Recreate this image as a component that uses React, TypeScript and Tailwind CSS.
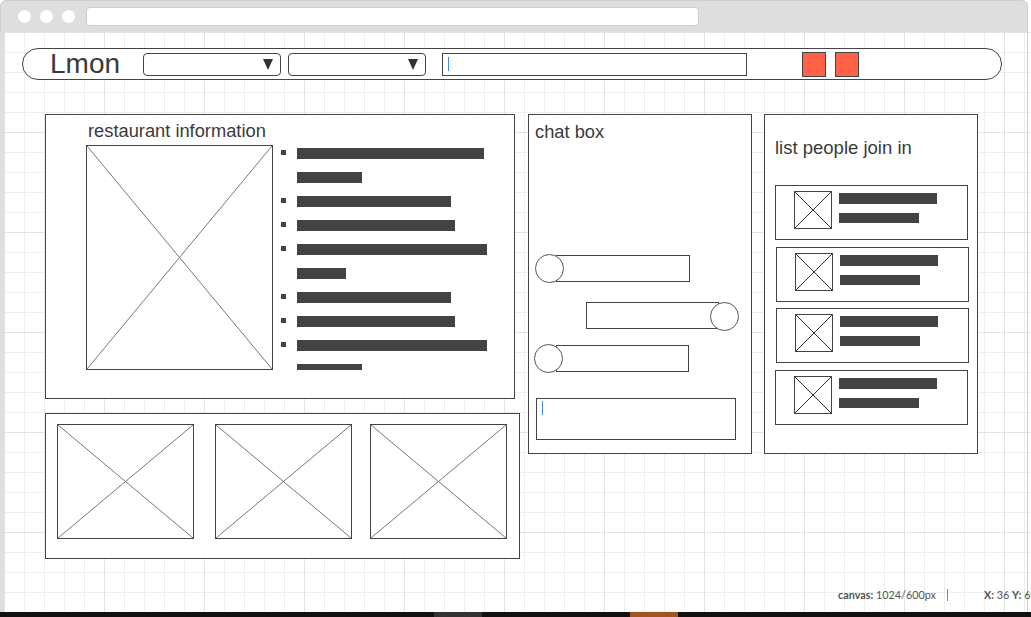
const infoRows = [
  { w: 187, bullet: true },
  { w: 65, bullet: false },
  { w: 154, bullet: true },
  { w: 158, bullet: true },
  { w: 190, bullet: true },
  { w: 49, bullet: false },
  { w: 154, bullet: true },
  { w: 158, bullet: true },
  { w: 190, bullet: true },
  { w: 65, bullet: false },
];

const people = ["ml-[10px] mt-[28px]", "ml-[11px] mt-[7px]", "ml-[11px] mt-[6px]", "ml-[10px] mt-[7px]"];

function Placeholder({ className, dot }: { className: string; dot?: boolean }) {
  return (
    <div className={`border border-[#444] bg-white shrink-0 ${className}`}>
      <svg className="block w-full h-full" viewBox="0 0 100 100" preserveAspectRatio="none">
        <line x1="0" y1="0" x2="100" y2="100" stroke={dot ? "#333" : "#777"} strokeWidth="1" vectorEffect="non-scaling-stroke" />
        <line x1="100" y1="0" x2="0" y2="100" stroke={dot ? "#333" : "#777"} strokeWidth="1" vectorEffect="non-scaling-stroke" />
      </svg>
    </div>
  );
}

function Select({ className }: { className: string }) {
  return (
    <div className={`h-[23px] rounded-[4px] border border-[#444] bg-white flex items-center justify-end pr-[7px] ${className}`}>
      <svg width="10" height="11" viewBox="0 0 10 11">
        <polygon points="0,0 10,0 5,11" fill="#333" />
      </svg>
    </div>
  );
}

function Circle({ className }: { className: string }) {
  return <div className={`relative z-10 w-[29px] h-[29px] shrink-0 rounded-full border border-[#555] bg-white ${className}`} />;
}

export default function App() {
  return (
    <div className="w-[1031px] h-[617px] overflow-hidden bg-white flex flex-col font-['Liberation_Sans',Arial,sans-serif] text-[#3a3a3a]">
      {/* browser chrome */}
      <div className="h-[32px] w-[1028px] shrink-0 bg-[#dedede] rounded-t-[6px] border border-b-0 border-[#cfcfcf] flex items-center">
        <div className="ml-[17px] w-[13px] h-[13px] rounded-full bg-white" />
        <div className="ml-[9px] w-[13px] h-[13px] rounded-full bg-white" />
        <div className="ml-[9px] w-[13px] h-[13px] rounded-full bg-white" />
        <div className="ml-[11px] w-[613px] h-[19px] rounded-[4px] bg-white border border-[#cfcfcf]" />
      </div>

      <div className="flex-1 flex bg-white bg-[linear-gradient(to_right,#e3e3e3_1px,transparent_1px),linear-gradient(to_bottom,#e3e3e3_1px,transparent_1px),linear-gradient(to_right,#eeeeee_1px,transparent_1px),linear-gradient(to_bottom,#eeeeee_1px,transparent_1px)] bg-[length:100px_100px,100px_100px,20px_20px,20px_20px] bg-[position:4px_0px]">
        <div className="w-[4px] bg-[#dedede]" />
        <div className="w-[1024px] border-r border-[#cfcfcf] flex flex-col">
          {/* header bar */}
          <div className="mt-[16px] ml-[18px] w-[980px] h-[32px] rounded-full border border-[#444] bg-white flex items-center">
            <span className="ml-[27px] w-[93px] text-[28px] leading-[30px]">Lmon</span>
            <Select className="w-[138px]" />
            <Select className="ml-[7px] w-[138px]" />
            <div className="ml-[16px] w-[305px] h-[23px] border border-[#444] bg-white flex items-center pl-[5px]">
              <div className="w-[1px] h-[14px] bg-[#3b8de0]" />
            </div>
            <div className="ml-[55px] w-[24px] h-[25px] border border-[#444] bg-[#ff6347]" />
            <div className="ml-[9px] w-[24px] h-[25px] border border-[#444] bg-[#ff6347]" />
          </div>

          {/* main */}
          <div className="mt-[34px] ml-[41px] flex items-start">
            <div className="w-[475px] flex flex-col">
              <div className="w-[470px] h-[285px] border border-[#444] bg-white flex flex-col">
                <div className="ml-[42px] mt-[7px] text-[18.3px] leading-[18px]">restaurant information</div>
                <div className="ml-[40px] mt-[5px] flex">
                  <Placeholder className="w-[187px] h-[225px]" />
                  <div className="ml-[8px] h-[225px] overflow-hidden flex flex-col">
                    {infoRows.map((r, i) => (
                      <div key={i} className="h-[24px] shrink-0 flex items-start">
                        <div className={`mt-[5px] w-[5px] h-[5px] ${r.bullet ? "bg-[#444]" : ""}`} />
                        <div className="ml-[11px] mt-[3px] h-[11px] bg-[#444]" style={{ width: r.w }} />
                      </div>
                    ))}
                  </div>
                </div>
              </div>
              <div className="mt-[14px] w-[475px] h-[146px] border border-[#444] bg-white flex items-start pt-[10px] pl-[11px]">
                <Placeholder className="w-[137px] h-[115px]" />
                <Placeholder className="ml-[21px] w-[137px] h-[115px]" />
                <Placeholder className="ml-[18px] w-[137px] h-[115px]" />
              </div>
            </div>

            {/* chat */}
            <div className="ml-[8px] w-[224px] h-[340px] border border-[#444] bg-white flex flex-col">
              <div className="ml-[6px] mt-[8px] text-[18.3px] leading-[18px]">chat box</div>
              <div className="ml-[6px] mt-[113px] flex items-center">
                <Circle className="" />
                <div className="-ml-[8px] w-[134px] h-[27px] border border-[#444]" />
              </div>
              <div className="ml-[57px] mt-[19px] flex items-start">
                <div className="w-[133px] h-[27px] border border-[#444]" />
                <Circle className="-ml-[9px]" />
              </div>
              <div className="ml-[5px] mt-[13px] flex items-center">
                <Circle className="" />
                <div className="-ml-[7px] w-[133px] h-[27px] border border-[#444]" />
              </div>
              <div className="ml-[7px] mt-[25px] w-[200px] h-[42px] border border-[#444] pl-[5px] pt-[2px]">
                <div className="w-[1px] h-[14px] bg-[#3b8de0]" />
              </div>
            </div>

            {/* people */}
            <div className="ml-[12px] w-[214px] h-[340px] border border-[#444] bg-white flex flex-col">
              <div className="ml-[10px] mt-[23px] text-[18.5px] leading-[19px]">list people join in</div>
              {people.map((m, i) => (
                <div key={i} className={`w-[193px] h-[55px] shrink-0 border border-[#444] flex items-start ${m}`}>
                  <Placeholder dot className="ml-[18px] mt-[5px] w-[38px] h-[38px]" />
                  <div className="ml-[7px] mt-[7px] flex flex-col">
                    <div className="w-[98px] h-[11px] bg-[#444]" />
                    <div className="mt-[9px] w-[80px] h-[10px] bg-[#444]" />
                  </div>
                </div>
              ))}
            </div>
          </div>

          {/* status */}
          <div className="mt-auto mb-[10px] ml-[834px] flex items-center whitespace-nowrap font-['Lato',sans-serif] text-[10.8px] leading-[14px] text-[#555]">
            <span className="shrink-0">
              <b>canvas:</b> 1024/600px
            </span>
            <div className="shrink-0 ml-[11px] w-[1px] h-[12px] bg-[#888]" />
            <span className="shrink-0 ml-[36px]">
              <b>X:</b> 36 <b>Y:</b> 6
            </span>
          </div>
        </div>
      </div>

      <div className="h-[5px] shrink-0 bg-[#111] flex">
        <div className="ml-[434px] w-[48px] bg-[#333]" />
        <div className="ml-[148px] w-[48px] bg-[#a0561e]" />
      </div>
    </div>
  );
}
